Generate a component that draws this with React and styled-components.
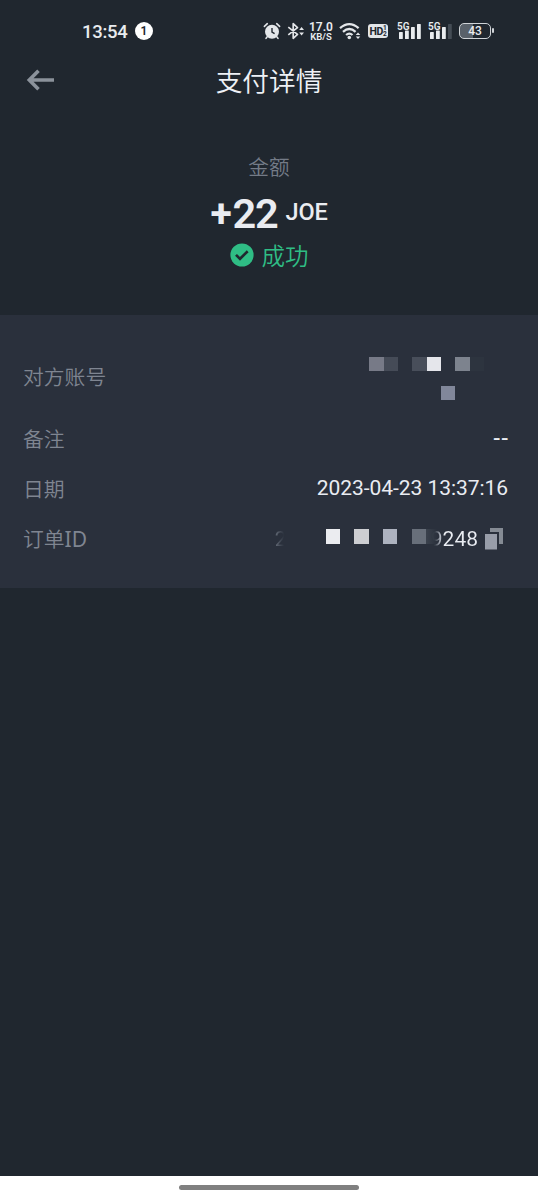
import React from "react";
import styled, { createGlobalStyle } from "styled-components";

const GlobalStyle = createGlobalStyle`
  body {
    margin: 0;
    background: #20272f;
    font-family: Roboto, "Noto Sans CJK SC", sans-serif;
  }
  * {
    box-sizing: border-box;
  }
`;

const Screen = styled.div`
  display: flex;
  flex-direction: column;
  width: 538px;
  height: 1200px;
  overflow: hidden;
  background: #20272f;
`;

const StatusBar = styled.div`
  display: flex;
  align-items: center;
  height: 50px;
  padding: 12px 47px 0 82px;
  color: #e9ecef;
`;

const Clock = styled.span`
  width: 53px;
  padding-top: 1px;
  font-size: 18.5px;
  font-weight: 500;
  line-height: 24px;
  letter-spacing: -0.3px;
`;

const Badge = styled.span`
  width: 18px;
  height: 18px;
  margin-right: auto;
  border-radius: 50%;
  background: #fff;
  color: #20272f;
  font-size: 12px;
  font-weight: 600;
  line-height: 18px;
  text-align: center;
`;

const StatusIcon = styled.svg`
  display: block;
  flex: none;
  margin-left: ${(p) => p.$gap || 0}px;
`;

const Speed = styled.div`
  display: flex;
  flex-direction: column;
  align-items: center;
  width: 24px;
  margin: 0 0 0 4px;
  font-size: 12px;
  font-weight: 600;
  line-height: 10px;
  white-space: nowrap;

  small {
    font-size: 9.5px;
    line-height: 9px;
  }
`;

const HdBadge = styled.span`
  display: flex;
  align-items: center;
  justify-content: center;
  width: 20px;
  height: 14px;
  margin-left: 6px;
  border-radius: 3px;
  background: #e3e6e9;
  color: #20272f;
  font-size: 10.5px;
  font-weight: 700;
  letter-spacing: -0.3px;
`;

const HdDigits = styled.span`
  display: flex;
  flex-direction: column;
  font-size: 6.5px;
  line-height: 6px;
`;

const Battery = styled.span`
  position: relative;
  width: 32px;
  height: 16px;
  margin-left: 7px;
  border: 1.5px solid #cfd3d7;
  border-radius: 5px;
  background: linear-gradient(90deg, #59616a 43%, transparent 43%);
  font-size: 12px;
  font-weight: 500;
  line-height: 14px;
  text-align: center;

  &::after {
    content: "";
    position: absolute;
    top: 4px;
    right: -3.5px;
    width: 1.5px;
    height: 5px;
    border-radius: 1px;
    background: #cfd3d7;
  }
`;

const Header = styled.header`
  display: grid;
  grid-template-columns: 80px 1fr 80px;
  align-items: center;
  height: 62px;
`;

const BackButton = styled.button`
  display: flex;
  padding: 0 0 2px 26px;
  border: 0;
  background: none;
`;

const Title = styled.h1`
  margin: 2px 0 0;
  color: #eef1f6;
  font-size: 26.7px;
  font-weight: 350;
  line-height: 40px;
  text-align: center;
`;

const Summary = styled.section`
  display: flex;
  flex-direction: column;
  align-items: center;
  height: 203px;
  padding-top: 41px;
`;

const SummaryLabel = styled.span`
  color: #747b87;
  font-size: 20.7px;
  font-weight: 350;
  line-height: 30px;
`;

const Amount = styled.div`
  display: flex;
  align-items: flex-start;
  height: 59px;
  padding-top: 7px;
  color: #eaecf1;
  font-size: 41.5px;
  font-weight: 600;
  line-height: 48px;
  letter-spacing: -1.2px;
`;

const Sign = styled.span`
  margin-right: 2px;
  font-size: 39px;
  font-weight: 700;
`;

const Currency = styled.span`
  margin: 3px 0 0 8px;
  font-size: 23.5px;
  font-weight: 500;
  line-height: 38px;
  letter-spacing: -0.2px;
`;

const Status = styled.div`
  display: flex;
  align-items: center;
  height: 26px;
  gap: 8px;
  color: #2fbd85;
  font-size: 23.5px;
  font-weight: 350;
`;

const Details = styled.section`
  height: 273px;
  padding: 25px 30px 24px 23px;
  background: #2a303c;
`;

const Row = styled.div`
  display: flex;
  align-items: center;
  justify-content: space-between;
  height: ${(p) => (p.$tall ? 74 : 50)}px;
`;

const Label = styled.span`
  padding-top: 1px;
  color: #7f8591;
  font-size: 20.8px;
  font-weight: 350;
  line-height: 30px;
`;

const Latin = styled.span`
  font-family: "Noto Sans", sans-serif;
  font-size: 21px;
  font-weight: 400;
`;

const Value = styled.span`
  display: flex;
  align-items: center;
  padding-right: ${(p) => p.$inset || 0}px;
  color: #e9ecf2;
  font-size: 21px;
  line-height: 26px;
  white-space: nowrap;
`;

const DateText = styled.span`
  margin-top: -2px;
  letter-spacing: -0.05px;
`;

const Dashes = styled.span`
  margin: -6px -1px 0 0;
  font-family: "Noto Sans", sans-serif;
  font-size: 23px;
  letter-spacing: 0.6px;
`;

const Mosaic = styled.span`
  display: grid;
  grid-template-columns: repeat(8, 14.33px);
  grid-auto-rows: 14.33px;
  padding-top: 3px;
`;

const Cell = styled.i`
  grid-row: ${(p) => p.$row || 1};
  grid-column: ${(p) => p.$col};
  background: ${(p) => p.$color};
`;

const OrderMosaic = styled(Mosaic)`
  margin: -8px -9.5px 0 39px;
`;

const FadedText = styled.span`
  background: linear-gradient(90deg, ${(p) => p.$stops});
  background-clip: text;
  color: transparent;
`;

const CopyIcon = styled.svg`
  margin-left: 7px;
`;

const NavBar = styled.div`
  display: flex;
  justify-content: center;
  height: 24px;
  margin-top: auto;
  padding-top: 9px;
  background: #fff;
`;

const NavHandle = styled.span`
  width: 180px;
  height: 5px;
  border-radius: 3px;
  background: #808080;
`;

const accountCells = [
  { col: 1, color: "#777a87" },
  { col: 2, color: "#454b57" },
  { col: 4, color: "#484e5a" },
  { col: 5, color: "#e5e6eb" },
  { col: 7, color: "#7d838e" },
  { col: 8, color: "#2d343f" },
  { col: 6, row: 3, color: "#81879a" }
];

const orderCells = [
  { col: 1, color: "#ebecf0" },
  { col: 3, color: "#cdced2" },
  { col: 5, color: "#adb2bf" },
  { col: 7, color: "#686f7a" },
  { col: 8, color: "linear-gradient(90deg, #3b424d, #2a303c 80%)" }
];

function Signal({ bars, gap }) {
  return (
    <StatusIcon $gap={gap} width="24" height="20" viewBox="0 0 24 20">
      <text x="0" y="8.5" fontSize="10" fontWeight="600" fill="#e9ecef">
        5G
      </text>
      {[11, 9.5, 6, 3].map((top, i) => (
        <rect
          key={top}
          x={2 + i * 6}
          y={top}
          width="3.8"
          height={18 - top}
          rx="0.6"
          fill={i < bars ? "#e9ecef" : "#444c55"}
        />
      ))}
    </StatusIcon>
  );
}

function StatusIcons() {
  return (
    <>
      <StatusIcon width="18" height="18" viewBox="0 0 18 18">
        <circle cx="9" cy="9.7" r="7" fill="#e3e6e9" />
        <path
          d="M1.4 4.4 4.3 1.7M13.7 1.7l2.9 2.7M4 15l-1 1.4M14 15l1 1.4"
          stroke="#e3e6e9"
          strokeWidth="1.6"
          strokeLinecap="round"
        />
        <path d="M9 6v4l2.6 1.6" fill="none" stroke="#20272f" strokeWidth="1.4" />
      </StatusIcon>
      <StatusIcon $gap={6} width="18" height="18" viewBox="0 0 18 18">
        <path
          d="M1.3 5.2 10.5 12.4 6.2 16.3V1.7L10.5 5.6 1.3 12.8"
          fill="none"
          stroke="#e3e6e9"
          strokeWidth="1.7"
          strokeLinejoin="round"
        />
        <path d="M14.6 5 17 8h-4.8zM14.6 13.4 17 10.4h-4.8z" fill="#e3e6e9" />
      </StatusIcon>
      <Speed>
        <span>17.0</span>
        <small>KB/S</small>
      </Speed>
      <StatusIcon $gap={6} width="23" height="18" viewBox="0 0 23 18">
        <path
          d="M1 6.2Q10.3-2 19.6 6.2M4 9.8Q10.3 4.3 16.6 9.8M7.1 13Q10.3 10.2 13.5 13"
          fill="none"
          stroke="#e3e6e9"
          strokeWidth="2.3"
        />
        <circle cx="10.3" cy="15.5" r="1.8" fill="#e3e6e9" />
        <path d="M19 10.5 21.3 13h-4.6zM19 17l2.3-2.5h-4.6z" fill="#e3e6e9" />
      </StatusIcon>
      <HdBadge>
        HD
        <HdDigits>
          <span>1</span>
          <span>2</span>
        </HdDigits>
      </HdBadge>
      <Signal bars={4} gap={9} />
      <Signal bars={3} gap={7} />
      <Battery>43</Battery>
    </>
  );
}

export default function App() {
  return (
    <Screen>
      <GlobalStyle />
      <StatusBar>
        <Clock>13:54</Clock>
        <Badge>1</Badge>
        <StatusIcons />
      </StatusBar>

      <Header>
        <BackButton aria-label="返回">
          <svg width="29" height="22" viewBox="0 0 29 22">
            <path
              d="M28 11H4M12.5 1.8 3.3 11l9.2 9.2"
              fill="none"
              stroke="#8b929b"
              strokeWidth="3.6"
            />
          </svg>
        </BackButton>
        <Title>支付详情</Title>
      </Header>

      <Summary>
        <SummaryLabel>金额</SummaryLabel>
        <Amount>
          <Sign>+</Sign>
          22
          <Currency>JOE</Currency>
        </Amount>
        <Status>
          <svg width="24" height="24" viewBox="0 0 24 24">
            <circle cx="12" cy="12" r="11.6" fill="#2fbd85" />
            <path
              d="m6 11.8 4 4 7.7-7.6"
              fill="none"
              stroke="#20272f"
              strokeWidth="2.6"
            />
          </svg>
          成功
        </Status>
      </Summary>

      <Details>
        <Row $tall>
          <Label>对方账号</Label>
          <Value $inset={24}>
            <Mosaic>
              {accountCells.map((c) => (
                <Cell key={c.col} $col={c.col} $row={c.row} $color={c.color} />
              ))}
            </Mosaic>
          </Value>
        </Row>
        <Row>
          <Label>备注</Label>
          <Value>
            <Dashes>--</Dashes>
          </Value>
        </Row>
        <Row>
          <Label>日期</Label>
          <Value>
            <DateText>2023-04-23 13:37:16</DateText>
          </Value>
        </Row>
        <Row>
          <Label>
            订单<Latin>ID</Latin>
          </Label>
          <Value $inset={5}>
            <FadedText $stops="#666d79, #2a303c 75%">2</FadedText>
            <OrderMosaic>
              {orderCells.map((c) => (
                <Cell key={c.col} $col={c.col} $color={c.color} />
              ))}
            </OrderMosaic>
            <FadedText $stops="#333a45 4px, #a8adb7 9px, #e9ecf2 13px">
              9248
            </FadedText>
            <CopyIcon width="18" height="22" viewBox="0 0 18 22">
              <path d="M5 0h13v16h-4V4H5z" fill="#858b94" />
              <path d="M0 6h12v15.5H0z" fill="#989da9" />
            </CopyIcon>
          </Value>
        </Row>
      </Details>

      <NavBar>
        <NavHandle />
      </NavBar>
    </Screen>
  );
}
